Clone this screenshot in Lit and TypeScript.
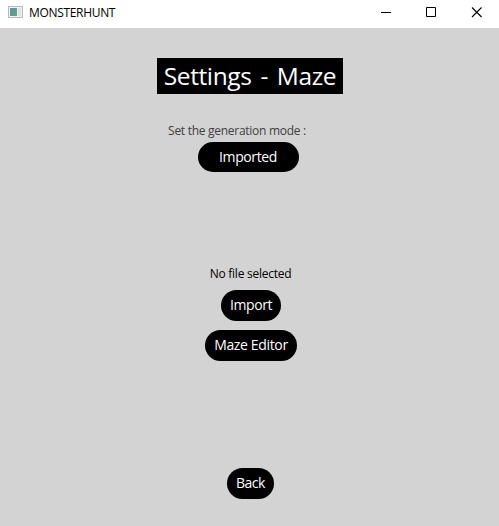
import { LitElement, html, css } from "lit";
import { customElement, property } from "lit/decorators.js";

@customElement("window-bar")
class WindowBar extends LitElement {
  @property() caption = "";
  static styles = css`
    :host { display: flex; height: 28px; background: #fff; align-items: flex-start; }
    .icon { display: block; margin: 6px 6px 0 8px; flex: none; }
    .caption { flex: 1; font-size: 12px; line-height: 16px; padding-top: 5px; letter-spacing: -0.32px; color: #000; }
    .controls { display: flex; height: 25px; }
    .controls svg { display: block; width: 46px; height: 25px; }
    .controls svg:last-child { width: 45px; }
  `;
  render() {
    return html`
      <svg class="icon" width="15" height="12" viewBox="0 0 15 12">
        <defs>
          <linearGradient id="g" x1="0" y1="0" x2="1" y2="1">
            <stop offset="0" stop-color="#5f8fa8" />
            <stop offset="1" stop-color="#5fa978" />
          </linearGradient>
        </defs>
        <rect x=".5" y=".5" width="14" height="11" fill="#f0f2f3" stroke="#b4babd" />
        <rect x="2" y="2" width="7" height="8" fill="url(#g)" />
        <rect x="10" y="2" width="3" height="8" fill="#dde1e4" />
      </svg>
      <span class="caption">${this.caption}</span>
      <div class="controls">
        <svg viewBox="0 0 46 25"><path d="M19 12.5h10" stroke="#000" /></svg>
        <svg viewBox="0 0 46 25"><path d="M18.5 7.5h9v9h-9z" fill="none" stroke="#000" /></svg>
        <svg viewBox="0 0 45 25"><path d="M18 7.5l9.5 9.5M27.5 7.5l-9.5 9.5" stroke="#000" stroke-width="1.1" /></svg>
      </div>
    `;
  }
}

@customElement("app-root")
class AppRoot extends LitElement {
  static styles = css`
    :host { display: flex; flex-direction: column; height: 526px; background: #d3d3d3; font-family: "Open Sans", "Noto Sans", sans-serif; overflow: hidden; }
    .content { display: flex; flex-direction: column; align-items: center; flex: 1; padding-top: 30px; }
    .title { width: 186px; height: 36px; margin: 0 0 0 1px; background: #000; color: #fff; font-size: 24.5px; font-weight: 400; line-height: 36px; text-align: center; white-space: nowrap; letter-spacing: -0.4px; word-spacing: 3px; }
    .label { margin: 29px 25px 0 0; height: 18px; line-height: 16px; font-size: 12px; letter-spacing: -0.28px; color: #404040; white-space: nowrap; }
    .button { height: 31px; padding: 0 0 1px; border: 0; border-radius: 16px; background: #000; color: #fff; font: 14px/30px "Open Sans", "Noto Sans", sans-serif; letter-spacing: -0.4px; text-align: center; white-space: nowrap; }
    .mode { width: 101px; height: 30px; margin-top: 1px; margin-right: 3px; }
    .status { margin: 94px 0 0 2px; height: 16px; line-height: 16px; font-size: 12px; letter-spacing: -0.25px; color: #000; white-space: nowrap; }
    .import { width: 60px; margin: 8px 0 0 3px; }
    .editor { width: 92px; margin: 9px 0 0 3px; letter-spacing: -0.35px; }
    .back { width: 47px; margin: 107px 0 0 2px; letter-spacing: -0.5px; }
  `;
  render() {
    return html`
      <window-bar caption="MONSTERHUNT"></window-bar>
      <main class="content">
        <h1 class="title">Settings - Maze</h1>
        <div class="label">Set the generation mode :</div>
        <button class="button mode">Imported</button>
        <div class="status">No file selected</div>
        <button class="button import">Import</button>
        <button class="button editor">Maze Editor</button>
        <button class="button back">Back</button>
      </main>
    `;
  }
}
